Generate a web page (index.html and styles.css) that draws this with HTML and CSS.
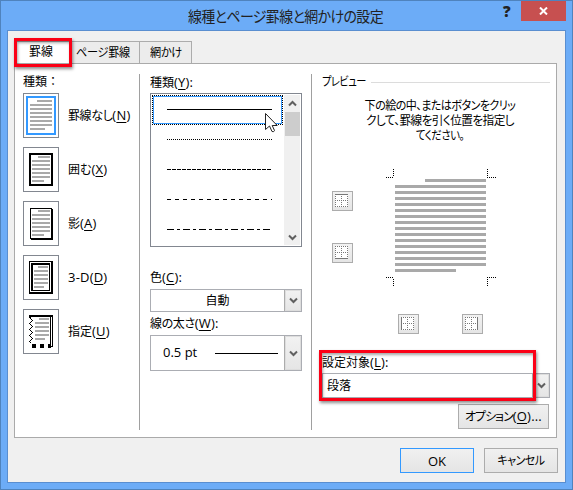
FILE: index.html
```
<!DOCTYPE html>
<html lang="ja">
<head>
<meta charset="utf-8">
<title>線種とページ罫線と網かけの設定</title>
<link rel="stylesheet" href="styles.css">
</head>
<body>
<div class="window">
  <header class="titlebar">
    <h1 class="title">線種とページ罫線と網かけの設定</h1>
    <span class="help">?</span>
    <span class="close"><svg width="9" height="8" viewBox="0 0 9 8"><path d="M1 .5 8 7.5M8 .5 1 7.5" stroke="#fff" stroke-width="2"/></svg></span>
  </header>
  <main class="client">
    <nav class="tabs">
      <span class="tab tab-active">罫線</span>
      <span class="tab tab-page"><span class="narrow">ページ罫線</span></span>
      <span class="tab tab-shade"><span class="narrow">網かけ</span></span>
    </nav>
    <section class="panel">
      <div class="col presets">
        <div class="label full">種類：</div>
        <div class="preset"><span class="thumb"><svg width="36" height="45" shape-rendering="crispEdges"><rect x="4" y="4" width="28" height="37" fill="none" stroke="#3399ff" stroke-width="2"/><path d="M14 8h15M7 12h22M7 16h22M7 20h22M7 24h22M7 28h22M7 32h22M7 36h15" stroke="#a9a9a9" stroke-width="2"/></svg></span><span class="name n1">罫線なし<span class="key">(<u>N</u>)</span></span></div>
        <div class="preset"><span class="thumb"><svg width="36" height="45" shape-rendering="crispEdges"><rect x="7" y="7" width="22" height="31" fill="none" stroke="#000" stroke-width="2"/><path d="M15 10h12M9 14h18M9 18h18M9 22h18M9 26h18M9 30h18M9 34h12" stroke="#a9a9a9" stroke-width="2"/></svg></span><span class="name">囲む<span class="key">(<u>X</u>)</span></span></div>
        <div class="preset"><span class="thumb"><svg width="36" height="45" shape-rendering="crispEdges"><path d="M7 7h22v1h1v31H8v-1H7zM8 8v29h20V8z" fill="#000" fill-rule="evenodd"/><path d="M15 10h12M9 14h18M9 18h18M9 22h18M9 26h18M9 30h18M9 34h12" stroke="#a9a9a9" stroke-width="2"/></svg></span><span class="name">影<span class="key">(<u>A</u>)</span></span></div>
        <div class="preset"><span class="thumb"><svg width="36" height="45" shape-rendering="crispEdges"><path d="M6 6h24v33H6zM7 7v30h21V7zM8 8h19v28H8zM10 10v25h16V10z" fill="#000" fill-rule="evenodd"/><path d="M15 12h10M11 16h14M11 20h14M11 24h14M11 28h14M11 32h10" stroke="#a9a9a9" stroke-width="2"/></svg></span><span class="name"><span class="key">3-D(<u>D</u>)</span></span></div>
        <div class="preset"><span class="thumb"><svg width="36" height="45" shape-rendering="crispEdges"><path d="M6 6h24v32h-2v1h-1V8H8v1H6zM28 8v29h1V8zM9 35h4v4H9zM17 35h4v4h-4zM25 35h2v4h-2z" fill="#000" fill-rule="evenodd"/><path d="M6.500 8.500l3 3-3 3 3 3-3 3 3 3-3 3 3 3-3 3 2 2" fill="none" stroke="#000"/><path d="M16 10h10M12 14h14M12 18h14M12 22h14M12 26h14M12 30h10" stroke="#a9a9a9" stroke-width="2"/></svg></span><span class="name">指定<span class="key">(<u>U</u>)</span></span></div>
      </div>
      <div class="col style-col">
        <div class="label">種類<span class="key">(<u>Y</u>):</span></div>
        <div class="listbox">
          <div class="items">
            <div class="item item-selected"><svg width="105" height="1"><rect width="105" height="1"/></svg></div>
            <div class="item"><svg width="105" height="1"><path d="M0 .5h105" stroke="#000" stroke-dasharray="1 1"/></svg></div>
            <div class="item"><svg width="105" height="1"><path d="M0 .5h104" stroke="#000" stroke-dasharray="4 1"/></svg></div>
            <div class="item"><svg width="105" height="1"><path d="M0 .5h105" stroke="#000" stroke-dasharray="4 4"/></svg></div>
            <div class="item"><svg width="105" height="1"><path d="M0 .5h105" stroke="#000" stroke-dasharray="7 3 3 3"/></svg></div>
          </div>
          <div class="scrollbar">
            <svg class="arrow" width="9" height="7"><path d="M1 5.500 4.500 2 8 5.500" fill="none" stroke="#606060" stroke-width="2"/></svg>
            <div class="scroll-thumb"></div>
            <svg class="arrow arrow-down" width="9" height="7"><path d="M1 1.500 4.500 5 8 1.500" fill="none" stroke="#606060" stroke-width="2"/></svg>
          </div>
          <svg class="cursor" width="13" height="20"><path d="M.5.5v16l4-3.500 2.500 5.500q2 .8 2.500-1L7.200 12.500h5z" fill="#fff" stroke="#222"/></svg>
        </div>
        <div class="label color-label">色<span class="key">(<u>C</u>):</span></div>
        <div class="combo color-combo"><span class="combo-value">自動</span><span class="drop"><svg width="9" height="7"><path d="M1 1.500 4.500 5 8 1.500" fill="none" stroke="#606060" stroke-width="2"/></svg></span></div>
        <div class="label width-label">線の太さ<span class="key">(<u>W</u>):</span></div>
        <div class="combo width-combo"><span class="combo-value">0.5 pt</span><i class="rule"></i><span class="drop"><svg width="9" height="7"><path d="M1 1.500 4.500 5 8 1.500" fill="none" stroke="#606060" stroke-width="2"/></svg></span></div>
      </div>
      <div class="col preview">
        <div class="legend"><span>プレビュー</span></div>
        <p class="hint"><span class="h1">下の絵の中、またはボタンをクリッ</span><span class="h2">クして、罫線を引く位置を指定し</span><span class="h3">てください。</span></p>
        <div class="stage">
          <div class="side">
            <span class="edge"><svg width="13" height="13" shape-rendering="crispEdges"><path class="dots" d="M.5 2v11M6.500 2v11M12.500 2v11M0 6.500h13M0 12.500h13"/><path class="solid" d="M0 .5h13"/></svg></span>
            <span class="edge"><svg width="13" height="13" shape-rendering="crispEdges"><path class="dots" d="M.5 0v11M6.500 0v11M12.500 0v11M0 .5h13M0 6.500h13"/><path class="solid" d="M0 12.500h13"/></svg></span>
          </div>
          <svg class="page" width="110" height="118" shape-rendering="crispEdges">
            <path d="M7.500 0v8M0 8.500h8M101.500 0v8M101 8.500h9M0 108.500h8M7.500 110v8M101 108.500h9M101.500 110v8" stroke="#000" stroke-dasharray="1 1"/>
            <path d="M39 11.500h61M9 17.500h91M9 23.500h91M9 29.500h91M9 35.500h91M9 41.500h91M9 47.500h91M9 53.500h91M9 59.500h91M9 65.500h91M9 71.500h91M9 77.500h91M9 83.500h91M9 89.500h91M9 95.500h91M9 101.500h61" stroke="#a9a9a9" stroke-width="3"/>
          </svg>
        </div>
        <div class="bottom-edges">
          <span class="edge"><svg width="13" height="13" shape-rendering="crispEdges"><path class="dots" d="M2 .5h11M2 6.500h11M2 12.500h11M6.500 0v13M12.500 0v13"/><path class="solid" d="M.5 0v13"/></svg></span>
          <span class="edge"><svg width="13" height="13" shape-rendering="crispEdges"><path class="dots" d="M0 .5h11M0 6.500h11M0 12.500h11M.5 0v13M6.500 0v13"/><path class="solid" d="M12.500 0v13"/></svg></span>
        </div>
        <div class="label target-label">設定対象<span class="key">(<u>L</u>):</span></div>
        <div class="combo target-combo"><span class="combo-value">段落</span><span class="drop"><svg width="9" height="7"><path d="M1 1.500 4.500 5 8 1.500" fill="none" stroke="#606060" stroke-width="2"/></svg></span></div>
        <button class="btn options">オプション<span class="key">(<u>O</u>)...</span></button>
      </div>
    </section>
    <footer class="actions">
      <button class="btn ok">OK</button>
      <button class="btn cancel"><span>キャンセル</span></button>
    </footer>
    <div class="mark mark-tab"></div>
    <div class="mark mark-target"></div>
  </main>
</div>
</body>
</html>
```
FILE: styles.css
```
* { box-sizing: border-box; }
body {
  margin: 0;
  font: 12px/16px "Open Sans", "Noto Sans CJK JP", sans-serif;
  font-feature-settings: "palt";
  color: #000;
  white-space: nowrap;
  overflow: hidden;
}
svg { display: block; flex: none; }
u { text-underline-offset: 2px; text-decoration-thickness: 1px; text-decoration-skip-ink: none; }
.key { font-size: 13px; letter-spacing: .2px; }

.window {
  width: 573px;
  height: 490px;
  padding: 0 6px 6px;
  background: #6cacf7;
  border: 1px solid #4f83bd;
}
.titlebar { display: flex; height: 29px; }
.title {
  flex: 1;
  margin: 0;
  padding-left: 181px;
  font-size: 15px;
  font-weight: 400;
  line-height: 30px;
  letter-spacing: -.65px;
  color: #222;
  transform: scaleX(.93);
  transform-origin: 181px 0;
}
.help { width: 15px; margin-right: 3px; font-size: 15px; font-weight: 800; line-height: 21px; color: #222; }
.close {
  display: flex;
  align-items: center;
  justify-content: center;
  width: 45px;
  height: 20px;
  background: #c75050;
}
.client {
  position: relative;
  width: 559px;
  height: 453px;
  padding: 10px 8px 0 6px;
  background: #f0f0f0;
  border: 1px solid #598ed0;
}
.tabs { display: flex; height: 22px; }
.tab {
  height: 22px;
  border: 1px solid #acacac;
  border-left: 0;
  border-bottom: 0;
  background: #ececec;
  line-height: 21px;
}
.tab-active { width: 58px; padding-left: 15px; background: #fff; line-height: 19px; }
.tab-page { width: 68px; padding-left: 4px; }
.tab-shade { width: 52px; padding-left: 10px; }
.narrow { display: inline-block; transform: scaleX(.93); transform-origin: 0 0; letter-spacing: -.3px; }
.panel {
  display: flex;
  width: 543px;
  height: 375px;
  padding: 10px 6px 8px 8px;
  background: #fff;
  border: 1px solid #aaa;
}
.col { height: 356px; flex: none; }
.label { height: 16px; }
.full { font-feature-settings: normal; }
.presets { width: 117px; border-right: 1px solid #a0a0a0; }
.presets .label { margin-bottom: 3px; }
.preset { display: flex; align-items: center; gap: 9px; height: 45px; margin-bottom: 9px; }
.thumb { width: 36px; height: 45px; box-shadow: inset 0 0 0 1px #828790; }
.n1 { letter-spacing: -.4px; }

.style-col { width: 172px; padding-left: 10px; border-right: 1px solid #a0a0a0; }
.listbox {
  position: relative;
  display: flex;
  width: 152px;
  height: 154px;
  margin-top: 3px;
  padding: 1px 1px 1px 1px;
  border: 1px solid #828790;
}
.items { width: 132px; }
.item { display: flex; align-items: center; height: 30px; padding: 0 0 1px 15px; }
.item-selected { position: relative; width: 131px; padding-left: 14px; border: 1px dotted #000; box-shadow: inset 0 0 0 1px #3399ff; }
.scrollbar { display: flex; flex-direction: column; align-items: center; width: 16px; height: 150px; background: #f0f0f0; }
.arrow { margin: 5px 0; }
.scroll-thumb { width: 15px; height: 24px; background: #cdcdcd; }
.arrow-down { margin: auto 0 4px; }
.cursor { position: absolute; left: 114px; top: 19px; }
.color-label { margin-top: 22px; }
.color-combo { margin-top: 4px; height: 23px; }
.width-label { margin-top: 3px; letter-spacing: -.4px; }
.width-combo { margin-top: 4px; height: 36px; }
.combo { display: flex; align-items: center; width: 152px; border: 1px solid #abadb3; background: #fff; }
.color-combo .combo-value { flex: 1; text-align: center; }
.width-combo .combo-value { width: 52px; margin: 0 0 3px 12px; font-size: 13px; }
.rule { width: 63px; height: 1px; margin: 0 auto 0 0; background: #000; }
.drop {
  display: flex;
  align-items: center;
  justify-content: center;
  align-self: stretch;
  width: 17px;
  border-left: 1px solid #acacac;
  background: linear-gradient(#f2f2f2, #e5e5e5);
  box-shadow: inset 0 0 0 1px #ddd;
}

.preview { width: 238px; padding-left: 10px; }
.legend { display: flex; align-items: center; height: 16px; width: 228px; letter-spacing: -.6px; }
.legend span { width: 49px; transform: scaleX(.85); transform-origin: 0 0; }
.legend::after { content: ""; flex: 1; height: 1px; background: #dcdcdc; }
.hint { width: 236px; margin: 8px 0 0; text-align: center; line-height: 15px; }
.hint span { display: block; height: 15px; letter-spacing: -.6px; }
.h1 { transform: scaleX(.92); }
.h2 { transform: scaleX(.97); }
.h3 { transform: scaleX(.87); }
.stage { display: flex; height: 118px; margin: 26px 0 0 10px; }
.side { display: flex; flex-direction: column; gap: 32px; width: 54px; padding-top: 22px; }
.edge { width: 21px; height: 20px; padding: 2px; border: 1px solid #acacac; background: linear-gradient(#f2f2f2, #e5e5e5); }
.edge svg { background: #fff; }
.dots { stroke: #777; stroke-dasharray: 1 1; }
.solid { stroke: #777; }
.bottom-edges { display: flex; gap: 43px; margin: 27px 0 0 76px; }
.target-label { margin-top: 20px; }
.target-combo { width: 228px; height: 25px; margin-top: 3px; }
.target-combo .combo-value { flex: 1; padding-left: 4px; }
.btn {
  display: block;
  height: 25px;
  padding: 0;
  border: 1px solid #acacac;
  background: linear-gradient(#f0f0f0, #e5e5e5);
  color: #000;
  font: inherit;
  font-feature-settings: inherit;
  line-height: 22px;
}
.options { width: 91px; margin: 6px 0 0 136px; letter-spacing: -1px; }
.actions { display: flex; justify-content: flex-end; gap: 10px; margin: 10px -1px 0 0; }
.ok, .cancel { width: 74px; }
.ok { border-color: #3399ff; font-size: 13px; }
.cancel span { display: inline-block; letter-spacing: -.5px; transform: scaleX(.91); }

.mark { position: absolute; border: 3px solid #fb0016; box-shadow: 1px 2px 3px rgba(0, 0, 0, .45), inset 1px 2px 3px rgba(0, 0, 0, .35); }
.mark-tab { left: 6px; top: 7px; width: 58px; height: 29px; }
.mark-target { left: 311px; top: 319px; width: 217px; height: 51px; }
```
